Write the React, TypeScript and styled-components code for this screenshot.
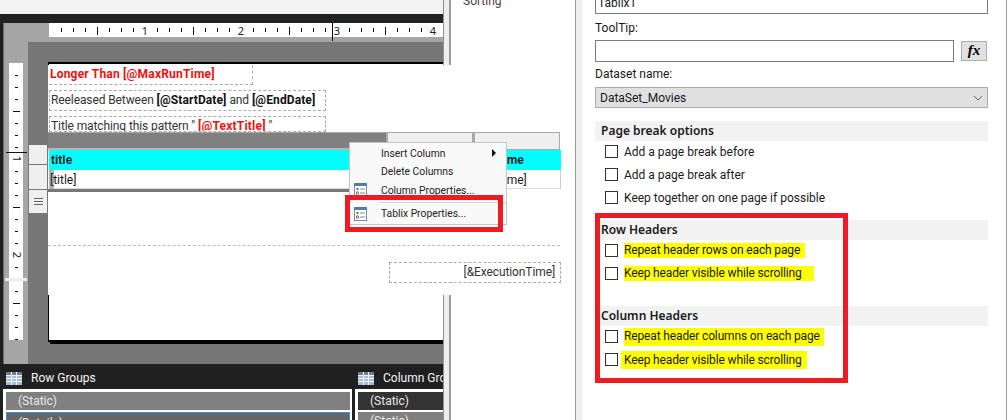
import React from "react";
import styled, { createGlobalStyle } from "styled-components";

const Global = createGlobalStyle`
  html, body { margin: 0; padding: 0; background: #fff; }
  body { font-family: Roboto, "Noto Sans", sans-serif; font-size: 12px; color: #1a1a1a; }
`;

const Screen = styled.div`
  position: relative;
  display: flex;
  width: 1008px;
  height: 420px;
  overflow: hidden;
  background: #fff;
`;

/* ---------- designer pane ---------- */
const Designer = styled.div`
  width: 443px;
  height: 420px;
  flex: none;
  display: flex;
  flex-direction: column;
  overflow: hidden;
  background: #202020;
`;
const TopStrip = styled.div`
  height: 14px;
  flex: none;
  background: #f3f3f3;
`;
const DarkBar = styled.div`
  height: 9px;
  flex: none;
  background: #222;
`;
const Surface = styled.div`
  height: 341px;
  flex: none;
  display: flex;
  margin-left: 3px;
  border-left: 1px solid #666;
`;
const Gutter = styled.div`
  width: 24px;
  flex: none;
  padding: 40px 0 0 4px;
  box-sizing: border-box;
  background: #a5a5a5;
`;
const DesignMain = styled.div`
  flex: 1;
  min-width: 0;
  display: flex;
  flex-direction: column;
`;
const RulerBand = styled.div`
  height: 19px;
  flex: none;
  padding-left: 21px;
  background: #a5a5a5;
`;
const Canvas = styled.div`
  flex: 1;
  padding: 20px 0 0 20px;
  background: #777;
`;
const Page = styled.div`
  width: 420px;
  height: 276px;
  box-sizing: content-box;
  display: flex;
  justify-content: flex-end;
  align-items: flex-end;
  background: #fff;
  border-top: 2px solid #000;
  border-left: 1px solid #000;
  border-bottom: 2px solid #000;
  box-shadow: 2px 2px 0 #000;
`;
const PageStub = styled.div`
  width: 24px;
  height: 25px;
  margin: 0 -2px 17px 0;
  border: 1px dashed #999;
`;
const GroupBar = styled.div`
  height: 25px;
  flex: none;
  box-sizing: border-box;
  padding-top: 3px;
  display: grid;
  grid-template-columns: 352px 91px;
  align-items: center;
  color: #f4f4f4;
  font-size: 12px;
  background: #202020;
`;
const GroupTitle = styled.div`
  display: flex;
  align-items: center;
  gap: 9px;
  padding-left: ${(p: { $inset: number }) => p.$inset}px;
  white-space: nowrap;
  overflow: hidden;
`;
const GroupLists = styled.div`
  flex: 1;
  display: grid;
  grid-template-columns: 349px 88px;
  column-gap: 3px;
  padding-left: 3px;
`;
const GroupList = styled.div`
  padding: 3px 2px 0 3px;
  background: #fff;
  overflow: hidden;
  & + & { padding-right: 0; }
`;
const GroupRow = styled.div<{ $bg: string; $selected?: boolean }>`
  height: 18px;
  margin-bottom: 2px;
  padding-left: 12px;
  box-sizing: border-box;
  line-height: 19px;
  color: #e8e8e8;
  font-size: 12px;
  background: ${(p) => p.$bg};
  ${(p) => (p.$selected ? "outline: 1px solid #3a8fe0; outline-offset: -1px; line-height: 22px;" : "")}
`;

/* ---------- dialog ---------- */
const DialogEdge = styled.div`
  width: 8px;
  flex: none;
  box-sizing: border-box;
  background: #eee;
  border-left: 1px solid #8f8f8f;
  border-right: 2px solid #9a9a9a;
`;
const NavPane = styled.div`
  width: 124px;
  flex: none;
  box-sizing: border-box;
  padding: 0 0 0 12px;
  color: #444;
  font-size: 12px;
  line-height: 0;
`;
const NavItem = styled.div`
  line-height: 14px;
  margin-top: -6px;
`;
const NavEdge = styled.div`
  width: 7px;
  flex: none;
  box-sizing: border-box;
  background: #eee;
  border-left: 1px solid #999;
`;
const FormPane = styled.div`
  width: 424px;
  flex: none;
  box-sizing: border-box;
  padding-left: 13px;
  padding-right: 18px;
`;
const RightEdge = styled.div`
  width: 1px;
  flex: none;
  background: #a0a0a0;
`;
const TextField = styled.div<{ $top?: number }>`
  height: 22px;
  box-sizing: border-box;
  margin-top: ${(p) => p.$top ?? 0}px;
  padding-left: 2px;
  border: 1px solid #7a7a7a;
  line-height: 20px;
  background: #fff;
  font-size: 12px;
  flex: 1;
`;
const FieldLabel = styled.div<{ $top: number }>`
  margin-top: ${(p) => p.$top}px;
  height: 16px;
  line-height: 16px;
  font-size: 12px;
`;
const FieldRow = styled.div`
  display: flex;
  gap: 7px;
  margin-top: 4px;
`;
const FxButton = styled.div`
  width: 26px;
  height: 20px;
  margin: 1px 1px 0 0;
  box-sizing: border-box;
  border: 1px solid #adadad;
  background: #e1e1e1;
  color: #000;
  text-align: center;
  font: italic bold 15px/17px "Liberation Serif", serif;
`;
const Select = styled.div`
  height: 21px;
  margin-top: 5px;
  box-sizing: border-box;
  display: flex;
  align-items: center;
  justify-content: space-between;
  padding: 0 4px 0 4px;
  border: 1px solid #acacac;
  background: #e0e0e0;
  font-size: 12px;
`;
const SectionHead = styled.div<{ $top: number }>`
  height: 20px;
  margin-top: ${(p) => p.$top}px;
  padding-left: 6px;
  line-height: 19px;
  font-family: "Noto Sans", sans-serif;
  font-weight: 600;
  font-size: 12px;
  background: #f2f2f2;
`;
const OptionList = styled.div`
  display: flex;
  flex-direction: column;
  margin-top: 4px;
  gap: 10px;
  padding-left: 10px;
`;
const Option = styled.div`
  display: flex;
  align-items: center;
  gap: 6px;
  height: 13px;
  font-size: 12px;
  white-space: nowrap;
`;
const CheckBox = styled.span`
  width: 13px;
  height: 13px;
  flex: none;
  box-sizing: border-box;
  border: 1px solid #333;
  background: #fff;
`;
const Marker = styled.span<{ $l: number; $r: number; $t: number; $b: number }>`
  background: #ffff00;
  padding: ${(p) => p.$t}px ${(p) => p.$r}px ${(p) => p.$b}px ${(p) => p.$l}px;
  margin-left: ${(p) => -p.$l}px;
  line-height: 13px;
  letter-spacing: -0.14px;
`;
const RedFrame = styled.div<{ $x: number; $y: number; $w: number; $h: number }>`
  position: absolute;
  left: ${(p) => p.$x}px;
  top: ${(p) => p.$y}px;
  width: ${(p) => p.$w}px;
  height: ${(p) => p.$h}px;
  box-sizing: border-box;
  border: 5px solid #ed1c24;
  pointer-events: none;
`;

/* ---------- pasted report snippet ---------- */
const Snippet = styled.div`
  position: absolute;
  left: 48px;
  top: 65px;
  width: 527px;
  height: 230px;
  background: #fff;
  font-size: 12px;
`;
const ReportBox = styled.div<{ $w: number; $h: number; $top: number; $line: number; $full?: boolean }>`
  width: ${(p) => p.$w}px;
  height: ${(p) => p.$h}px;
  margin: ${(p) => p.$top}px 0 0 1px;
  box-sizing: border-box;
  padding-left: 1px;
  line-height: ${(p) => p.$line}px;
  letter-spacing: -0.1px;
  white-space: nowrap;
  overflow: hidden;
  border-right: 1px dashed #aaa;
  border-bottom: 1px dashed #aaa;
  ${(p) => (p.$full ? "border-top: 1px dashed #aaa; border-left: 1px dashed #aaa;" : "")}
  color: #333;
`;
const Red = styled.b`
  color: #f01010;
  letter-spacing: 0.2px;
`;
const Param = styled.b`
  color: #111;
  letter-spacing: 0.1px;
`;
const Tablix = styled.div`
  width: 513px;
  display: flex;
  flex-direction: column;
`;
const HandleRow = styled.div`
  display: flex;
  height: 18px;
`;
const TableGrip = styled.div`
  width: 338px;
  box-sizing: border-box;
  background: #808080;
  border-top: 1px solid #a8a8a8;
  border-bottom: 2px solid #b8b8b8;
`;
const ColumnHandle = styled.div`
  width: 87px;
  box-sizing: border-box;
  background: #efefef;
  border: 1px solid #a8a8a8;
  border-left-width: 2px;
`;
const TableRow = styled.div<{ $head?: boolean }>`
  display: grid;
  grid-template-columns: 425px 87px;
  height: ${(p) => (p.$head ? 20 : 19)}px;
  margin-left: 1px;
  line-height: ${(p) => (p.$head ? 20 : 21)}px;
  padding-left: ${(p) => (p.$head ? 0 : 0)}px;
  background: ${(p) => (p.$head ? "#00ffff" : "#fff")};
  font-weight: ${(p) => (p.$head ? 700 : 400)};
  ${(p) => (p.$head ? "font-family: 'Liberation Sans', sans-serif;" : "border-right: 1px solid #ccc;")}
  border-bottom: ${(p) => (p.$head ? 0 : 1)}px solid #d8d8d8;
  box-sizing: border-box;
`;
const TableCell = styled.div<{ $grip?: boolean }>`
  padding-left: ${(p) => (p.$grip ? 1 : 2)}px;
  white-space: nowrap;
  ${(p) => (p.$grip ? "background: linear-gradient(90deg, #b4b4b4 5px, transparent 5px);" : "")}
`;
const GripBottom = styled.div`
  width: 302px;
  height: 3px;
  background: #777;
`;
const DottedRule = styled.div`
  width: 512px;
  margin-top: 53px;
  border-top: 1px dashed #bbb;
`;
const FooterBox = styled.div`
  width: 172px;
  height: 21px;
  margin: 16px 0 0 341px;
  box-sizing: border-box;
  border: 1px dashed #aaa;
  padding-right: 5px;
  text-align: right;
  line-height: 19px;
  letter-spacing: -0.1px;
  color: #333;
`;
const RowHandles = styled.div`
  position: absolute;
  left: 29px;
  top: 145px;
  width: 18px;
  display: flex;
  flex-direction: column;
  gap: 1px;
`;
const RowHandle = styled.div<{ $h: number }>`
  height: ${(p) => p.$h}px;
  display: flex;
  align-items: center;
  justify-content: center;
  background: #efefef;
`;
const Menu = styled.div`
  position: absolute;
  left: 301px;
  top: 77px;
  width: 158px;
  height: 83px;
  box-sizing: border-box;
  padding-top: 1px;
  border: 1px solid #c4c4c4;
  background: #f9f9f9;
  font-size: 10.3px;
  color: #222;
`;
const MenuItem = styled.div`
  position: relative;
  height: 18.5px;
  display: flex;
  align-items: center;
  padding-left: 31px;
  box-sizing: border-box;
  white-space: nowrap;
`;
const MenuIcon = styled.span`
  position: absolute;
  left: 4px;
  top: 2px;
  display: flex;
`;
const MenuArrow = styled.span`
  position: absolute;
  right: 10px;
  top: 5px;
  width: 0;
  height: 0;
  border-left: 4px solid #111;
  border-top: 4px solid transparent;
  border-bottom: 4px solid transparent;
`;
const MenuSep = styled.div`
  height: 1px;
  margin: 2px 0 2px 29px;
  background: #d4d4d4;
`;

/* ---------- drawings ---------- */
const HRuler = () => {
  const ticks = Array.from({ length: 33 }, (_, i) => i + 1);
  return (
    <svg width="394" height="19" style={{ display: "block" }}>
      <rect width="394" height="14" fill="#fff" />
      {ticks.map((i) => {
        if (i % 8 === 0) return null;
        const long = i % 8 === 4;
        const x = i * 12 + 0.5;
        return <line key={i} x1={x} x2={x} y1={long ? 4 : 5} y2={long ? 12 : 9} stroke="#111" />;
      })}
      {[1, 2, 3, 4].map((n) => (
        <text key={n} x={n * 96} y="12" textAnchor="middle" fontSize="11" fontFamily="Noto Sans, sans-serif" fill="#222">
          {n}
        </text>
      ))}
      <line x1="283.5" x2="283.5" y1="0" y2="18" stroke="#111" />
    </svg>
  );
};

const VRuler = () => {
  const ticks = Array.from({ length: 24 }, (_, i) => i + 1);
  return (
    <svg width="22" height="277" style={{ display: "block", marginLeft: -3, overflow: "visible" }}>
      <rect x="4" width="14" height="277" fill="#fff" />
      <rect x="0" y="215" width="22" height="3" fill="#eee" />
      {ticks.map((i) => {
        if (i % 8 === 0 || i * 12 === 216) return null;
        const long = i % 8 === 4;
        const y = i * 12 + 0.5;
        return <line key={i} y1={y} y2={y} x1={long ? 8 : 10} x2={long ? 15 : 13} stroke="#111" />;
      })}
      {[1, 2].map((n) => (
        <text
          key={n}
          transform={`translate(8 ${n * 96}) rotate(90)`}
          textAnchor="middle"
          fontSize="11"
          fontFamily="Noto Sans, sans-serif"
          fill="#222"
        >
          {n}
        </text>
      ))}
      <line x1="1" x2="22" y1="89.5" y2="89.5" stroke="#111" />
    </svg>
  );
};

const GridIcon = ({ cols }: { cols: number[] }) => (
  <svg width="16" height="13" viewBox="0 0 16 13" style={{ flex: "none" }}>
    <rect width="16" height="13" fill="#a9bcd0" />
    <rect y="0" width="16" height="3" fill="#6d7f92" />
    {[3.5, 6.5, 9.5].map((y) => (
      <line key={y} x1="0" x2="16" y1={y} y2={y} stroke="#f4f4f4" />
    ))}
    {cols.map((x) => (
      <line key={x} y1="0" y2="13" x1={x} x2={x} stroke="#f4f4f4" />
    ))}
  </svg>
);

const PropsIcon = () => (
  <svg width="13" height="14" viewBox="0 0 13 14">
    <rect x="0.5" y="0.5" width="12" height="13" fill="#fff" stroke="#7d8c9c" />
    <rect x="0" y="0" width="13" height="3" fill="#4f7fb0" />
    <rect x="2.5" y="5" width="2" height="2" fill="#666" />
    <rect x="6" y="5.5" width="5" height="1" fill="#888" />
    <rect x="2.5" y="9" width="2" height="2" fill="none" stroke="#666" strokeWidth="0.8" />
    <rect x="6" y="9.5" width="5" height="1" fill="#888" />
  </svg>
);

const Hamburger = () => (
  <svg width="9" height="8" viewBox="0 0 9 8">
    <path d="M0 .5h9M0 3.5h9M0 6.5h9" stroke="#666" />
  </svg>
);

const Chevron = () => (
  <svg width="10" height="6" viewBox="0 0 10 6">
    <path d="M1 1l4 4 4-4" fill="none" stroke="#666" />
  </svg>
);

export default function App() {
  return (
    <Screen>
      <Global />
      <Designer>
        <TopStrip />
        <DarkBar />
        <Surface>
          <Gutter>
            <VRuler />
          </Gutter>
          <DesignMain>
            <RulerBand>
              <HRuler />
            </RulerBand>
            <Canvas>
              <Page>
                <PageStub />
              </Page>
            </Canvas>
          </DesignMain>
        </Surface>
        <GroupBar>
          <GroupTitle $inset={6}>
            <GridIcon cols={[5.5, 10.5]} />
            Row Groups
          </GroupTitle>
          <GroupTitle $inset={6}>
            <GridIcon cols={[5.5, 10.5]} />
            Column Groups
          </GroupTitle>
        </GroupBar>
        <GroupLists>
          <GroupList>
            <GroupRow $bg="#808080">(Static)</GroupRow>
            <GroupRow $bg="#666" $selected>
              (Details)
            </GroupRow>
          </GroupList>
          <GroupList>
            <GroupRow $bg="#333">(Static)</GroupRow>
            <GroupRow $bg="#808080">(Static)</GroupRow>
          </GroupList>
        </GroupLists>
      </Designer>

      <DialogEdge />
      <NavPane>
        <NavItem>Sorting</NavItem>
      </NavPane>
      <NavEdge />
      <FormPane>
        <TextField $top={-8}>Tablix1</TextField>
        <FieldLabel $top={6}>ToolTip:</FieldLabel>
        <FieldRow>
          <TextField />
          <FxButton>fx</FxButton>
        </FieldRow>
        <FieldLabel $top={4}>Dataset name:</FieldLabel>
        <Select>
          DataSet_Movies
          <Chevron />
        </Select>

        <SectionHead $top={13}>Page break options</SectionHead>
        <OptionList>
          <Option>
            <CheckBox />
            Add a page break before
          </Option>
          <Option>
            <CheckBox />
            Add a page break after
          </Option>
          <Option>
            <CheckBox />
            Keep together on one page if possible
          </Option>
        </OptionList>

        <SectionHead $top={16}>Row Headers</SectionHead>
        <OptionList>
          <Option>
            <CheckBox />
            <Marker $l={0} $r={5} $t={1} $b={1}>
              Repeat header rows on each page
            </Marker>
          </Option>
          <Option>
            <CheckBox />
            <Marker $l={0} $r={12} $t={1} $b={1}>
              Keep header visible while scrolling
            </Marker>
          </Option>
        </OptionList>

        <SectionHead $top={26}>Column Headers</SectionHead>
        <OptionList>
          <Option>
            <CheckBox />
            <Marker $l={0} $r={4} $t={2} $b={3}>
              Repeat header columns on each page
            </Marker>
          </Option>
          <Option>
            <CheckBox />
            <Marker $l={3} $r={5} $t={3} $b={2}>
              Keep header visible while scrolling
            </Marker>
          </Option>
        </OptionList>
      </FormPane>
      <RightEdge />

      <Snippet>
        <ReportBox $w={204} $h={20} $top={0} $line={18}>
          <Red>Longer Than [@MaxRunTime]</Red>
        </ReportBox>
        <ReportBox $w={277} $h={21} $top={5} $line={19} $full>
          Reeleased Between <Param>[@StartDate]</Param> and <Param>[@EndDate]</Param>
        </ReportBox>
        <ReportBox $w={277} $h={16} $top={5} $line={19} $full>
          Title matching this pattern " <Red>[@TextTitle]</Red> "
        </ReportBox>
        <Tablix>
          <HandleRow>
            <TableGrip />
            <ColumnHandle />
            <ColumnHandle />
          </HandleRow>
          <TableRow $head>
            <TableCell>title</TableCell>
            <TableCell>Runtime</TableCell>
          </TableRow>
          <TableRow>
            <TableCell $grip>[title]</TableCell>
            <TableCell>[Runtime]</TableCell>
          </TableRow>
          <GripBottom />
        </Tablix>
        <DottedRule />
        <FooterBox>[&amp;ExecutionTime]</FooterBox>
        <Menu>
          <MenuItem>
            Insert Column
            <MenuArrow />
          </MenuItem>
          <MenuItem>Delete Columns</MenuItem>
          <MenuItem>
            <MenuIcon>
              <PropsIcon />
            </MenuIcon>
            Column Properties...
          </MenuItem>
          <MenuSep />
          <MenuItem>
            <MenuIcon>
              <PropsIcon />
            </MenuIcon>
            Tablix Properties...
          </MenuItem>
        </Menu>
      </Snippet>

      <RowHandles>
        <RowHandle $h={19} />
        <RowHandle $h={24} />
        <RowHandle $h={23}>
          <Hamburger />
        </RowHandle>
      </RowHandles>

      <RedFrame $x={345} $y={195} $w={158} $h={37} />
      <RedFrame $x={595} $y={213} $w={253} $h={170} />
    </Screen>
  );
}
